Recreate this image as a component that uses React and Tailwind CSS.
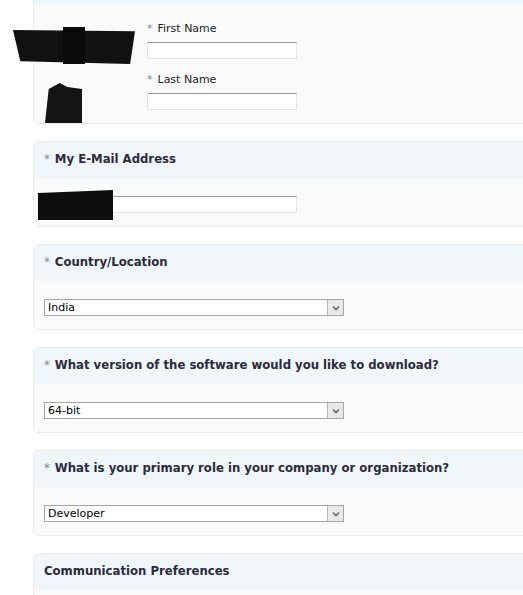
import React from 'react';

const Star = () => <span className="text-[#8a8a8a] font-normal mr-[5px]">*</span>;

const TextInput = ({ className = '' }) => (
  <div className={`h-[17px] bg-white border border-[#e3e3e3] border-t-[#9a9a9a] ${className}`} />
);

const Select = ({ value }) => (
  <div className="w-[300px] h-[17px] flex border border-[#a6a6a6] bg-white">
    <div className="flex-1 pl-[3px] text-[11px] leading-[15px] text-black">{value}</div>
    <div className="w-[16px] h-full bg-[#e9e9e9] border-l border-[#b5b5b5] flex items-center justify-center">
      <svg width="8" height="6" viewBox="0 0 8 6">
        <path d="M1 1.5 L4 4.5 L7 1.5" fill="none" stroke="#666" strokeWidth="1.6" />
      </svg>
    </div>
  </div>
);

const Card = ({ title, required, children, bodyClass = '' }) => (
  <div className="w-[500px] rounded-[5px] border border-[#ececec] overflow-hidden">
    <div className="h-[36px] bg-[#f1f6fb] px-[10px] flex items-center text-[11.7px] font-bold text-[#2b2b3c]">
      {required && <Star />}
      {title}
    </div>
    <div className={`bg-[#fafafa] px-[10px] ${bodyClass}`}>{children}</div>
  </div>
);

const SelectCard = ({ title, value }) => (
  <Card title={title} required bodyClass="pt-[18px] pb-[13px]">
    <Select value={value} />
  </Card>
);

export default function App() {
  return (
    <div className="w-[523px] h-[595px] overflow-hidden bg-white font-['DejaVu_Sans',Verdana,sans-serif]">
      <div className="pl-[33px] flex flex-col gap-[17px] -mt-[32px]">
        <div className="relative">
          <Card bodyClass="pt-[17px] pb-[13px] pl-[113px]">
            <div className="text-[11px] text-[#222] leading-[14px]"><Star />First Name</div>
            <TextInput className="w-[150px] mt-[6px]" />
            <div className="text-[11px] text-[#222] leading-[14px] mt-[14px]"><Star />Last Name</div>
            <TextInput className="w-[150px] mt-[6px]" />
          </Card>
          {/* redaction marks */}
          <div className="absolute left-[-20px] top-[62px] w-[122px] h-[34px] bg-[#111] [clip-path:polygon(0_0,100%_4%,96%_100%,6%_92%)]" />
          <div className="absolute left-[30px] top-[59px] w-[22px] h-[37px] bg-[#0a0a0a]" />
          <div className="absolute left-[12px] top-[115px] w-[37px] h-[40px] bg-[#141414] [clip-path:polygon(10%_15%,40%_0,60%_10%,100%_15%,100%_100%,0_100%)]" />
        </div>
        <div className="relative">
          <Card title="My E-Mail Address" required bodyClass="pt-[18px] pb-[13px]">
            <TextInput className="w-[253px]" />
          </Card>
          <div className="absolute left-[5px] top-[49px] w-[75px] h-[30px] bg-[#0d0d0d] [clip-path:polygon(0_10%,100%_0,100%_100%,0_100%)]" />
        </div>
        <SelectCard title="Country/Location" value="India" />
        <SelectCard title="What version of the software would you like to download?" value="64-bit" />
        <SelectCard title="What is your primary role in your company or organization?" value="Developer" />
        <Card title="Communication Preferences" bodyClass="h-[60px]" />
      </div>
    </div>
  );
}
